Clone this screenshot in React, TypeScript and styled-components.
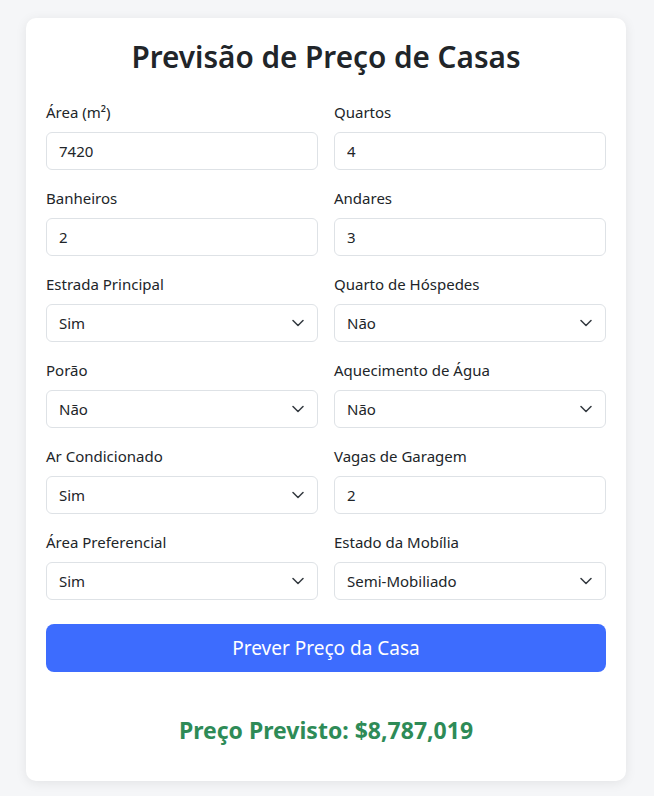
import styled, { createGlobalStyle } from "styled-components";

const GlobalStyle = createGlobalStyle`
  html, body {
    margin: 0;
    padding: 0;
    background: #f5f6f8;
    font-family: "Noto Sans", "Open Sans", sans-serif;
    color: #212529;
  }
  * { box-sizing: border-box; }
`;

type Field =
  | { label: string; kind: "input"; value: string }
  | { label: string; kind: "select"; value: string; options: string[] };

const yesNo = ["Sim", "Não"];

const fields: Field[] = [
  { label: "Área (m²)", kind: "input", value: "7420" },
  { label: "Quartos", kind: "input", value: "4" },
  { label: "Banheiros", kind: "input", value: "2" },
  { label: "Andares", kind: "input", value: "3" },
  { label: "Estrada Principal", kind: "select", value: "Sim", options: yesNo },
  { label: "Quarto de Hóspedes", kind: "select", value: "Não", options: yesNo },
  { label: "Porão", kind: "select", value: "Não", options: yesNo },
  { label: "Aquecimento de Água", kind: "select", value: "Não", options: yesNo },
  { label: "Ar Condicionado", kind: "select", value: "Sim", options: yesNo },
  { label: "Vagas de Garagem", kind: "input", value: "2" },
  { label: "Área Preferencial", kind: "select", value: "Sim", options: yesNo },
  {
    label: "Estado da Mobília",
    kind: "select",
    value: "Semi-Mobiliado",
    options: ["Mobiliado", "Semi-Mobiliado", "Não Mobiliado"],
  },
];

const Chevron = () => (
  <ChevronIcon viewBox="0 0 12 8" width="12" height="8">
    <path
      d="M1 1.5 6 6.5 11 1.5"
      fill="none"
      stroke="#343a40"
      strokeWidth="1.5"
      strokeLinecap="round"
      strokeLinejoin="round"
    />
  </ChevronIcon>
);

export default function App() {
  return (
    <Page>
      <GlobalStyle />
      <Card>
        <Title>Previsão de Preço de Casas</Title>
        <Grid>
          {fields.map((f) => (
            <Group key={f.label}>
              <Label>{f.label}</Label>
              {f.kind === "input" ? (
                <Input type="number" defaultValue={f.value} />
              ) : (
                <SelectWrap>
                  <Select defaultValue={f.value}>
                    {f.options.map((o) => (
                      <option key={o}>{o}</option>
                    ))}
                  </Select>
                  <Chevron />
                </SelectWrap>
              )}
            </Group>
          ))}
        </Grid>
        <Button type="button">Prever Preço da Casa</Button>
        <Result>Preço Previsto: $8,787,019</Result>
      </Card>
    </Page>
  );
}

const Page = styled.div`
  padding: 18px 28px 15px 26px;
`;

const Card = styled.div`
  width: 600px;
  background: #fff;
  border-radius: 10px;
  box-shadow: 0 2px 12px rgba(0, 0, 0, 0.08);
  padding: 20px;
`;

const Title = styled.h1`
  margin: 0 0 24px;
  font-size: 29.7px;
  line-height: 38px;
  font-weight: 600;
  text-align: center;
  color: #212529;
`;

const Grid = styled.div`
  display: grid;
  grid-template-columns: 1fr 1fr;
  column-gap: 16px;
`;

const Group = styled.div`
  margin-bottom: 16px;
`;

const Label = styled.label`
  display: block;
  font-size: 15px;
  line-height: 24px;
  margin-bottom: 8px;
`;

const Input = styled.input`
  display: block;
  width: 100%;
  height: 38px;
  padding: 6px 12px;
  font: inherit;
  font-size: 15px;
  color: #212529;
  background: #fff;
  border: 1px solid #dee2e6;
  border-radius: 6px;
  outline: none;
  appearance: textfield;
  -moz-appearance: textfield;
  &::-webkit-outer-spin-button,
  &::-webkit-inner-spin-button {
    -webkit-appearance: none;
    margin: 0;
  }
`;

const SelectWrap = styled.div`
  position: relative;
`;

const Select = styled.select`
  display: block;
  width: 100%;
  height: 38px;
  padding: 6px 36px 6px 12px;
  font: inherit;
  font-size: 15px;
  color: #212529;
  background: #fff;
  border: 1px solid #dee2e6;
  border-radius: 6px;
  appearance: none;
  -webkit-appearance: none;
  outline: none;
`;

const ChevronIcon = styled.svg`
  position: absolute;
  right: 14px;
  top: 15px;
  pointer-events: none;
`;

const Button = styled.button`
  display: block;
  width: 100%;
  height: 48px;
  margin-top: 8px;
  border: none;
  border-radius: 8px;
  background: #3d6cfe;
  color: #fff;
  font: inherit;
  font-size: 19px;
  cursor: pointer;
`;

const Result = styled.div`
  margin: 44px 0 16px;
  text-align: center;
  font-size: 23px;
  line-height: 29px;
  font-weight: 700;
  color: #2e8b57;
`;
